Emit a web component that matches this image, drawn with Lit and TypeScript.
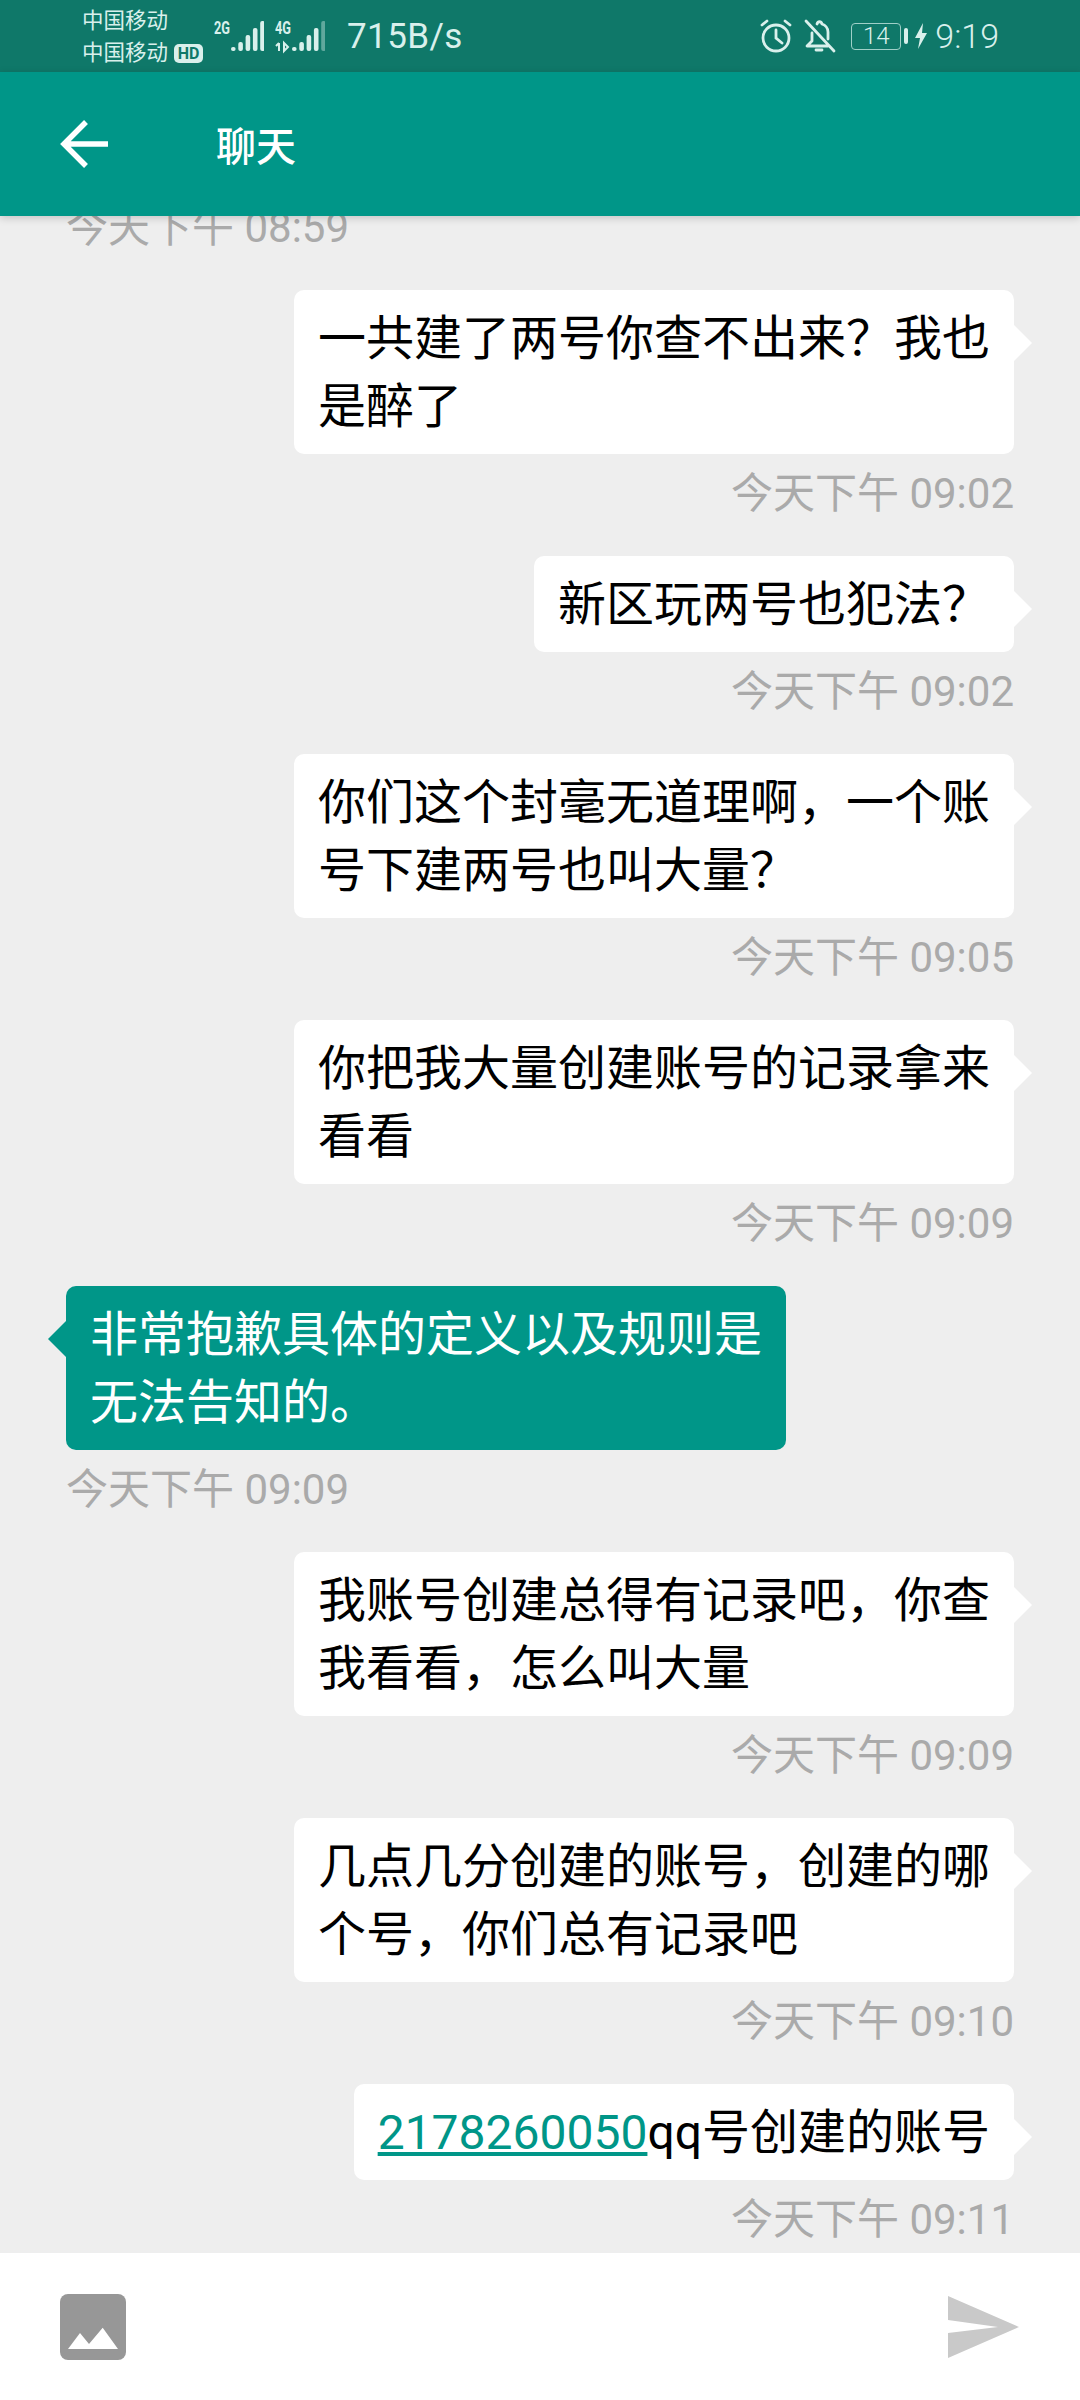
import { LitElement, html, css, svg } from "lit";
import { customElement } from "lit/decorators.js";

type Msg = { side: "me" | "them"; text?: string; link?: string; rest?: string; time: string };

const MSGS: Msg[] = [
  { side: "me", text: "一共建了两号你查不出来？我也是醉了", time: "今天下午 09:02" },
  { side: "me", text: "新区玩两号也犯法？", time: "今天下午 09:02" },
  { side: "me", text: "你们这个封毫无道理啊，一个账号下建两号也叫大量？", time: "今天下午 09:05" },
  { side: "me", text: "你把我大量创建账号的记录拿来看看", time: "今天下午 09:09" },
  { side: "them", text: "非常抱歉具体的定义以及规则是无法告知的。", time: "今天下午 09:09" },
  { side: "me", text: "我账号创建总得有记录吧，你查我看看，怎么叫大量", time: "今天下午 09:09" },
  { side: "me", text: "几点几分创建的账号，创建的哪个号，你们总有记录吧", time: "今天下午 09:10" },
  { side: "me", link: "2178260050", rest: "qq号创建的账号", time: "今天下午 09:11" },
];

const TOPS = [34, 29, 22, 15, 8];
const bars = (dimLast: boolean) =>
  TOPS.map(
    (t, i) => svg`<rect x=${17 + i * 7.3} y=${t} width="4.6" height=${38 - t} rx="2" fill="currentColor" opacity=${dimLast && i === 4 ? 0.4 : 1}/>`
  );

@customElement("app-root")
export class AppRoot extends LitElement {
  static styles = css`
    :host {
      display: block;
      width: 1080px;
      height: 2400px;
      background: #eeeeee;
      font-family: Roboto, "Noto Sans CJK SC", sans-serif;
    }
    .page { display: flex; flex-direction: column; height: 2400px; }
    .status {
      height: 72px;
      flex: none;
      background: #0f7869;
      color: #d9f0ec;
      display: flex;
      align-items: center;
      padding: 0 81px 0 82px;
    }
    .carrier { display: flex; flex-direction: column; font-size: 21.5px; line-height: 32px; width: 132px; margin-top: 2px; }
    .carrier div { display: flex; align-items: center; white-space: nowrap; }
    .hd {
      margin-left: 6px;
      width: 29px; height: 19px; border-radius: 5px;
      background: #d9f0ec; color: #0f7869;
      font-size: 16px; font-weight: 700; line-height: 19px; text-align: center;
    }
    .sig { display: block; margin: 0 11px 0 0; }
    .speed { font-size: 35px; margin-left: 11px; letter-spacing: 0.4px; }
    .spacer { flex: 1; }
    .sicon { display: block; }
    .bell { display: block; margin-left: 12px; }
    .batt {
      width: 50px; height: 27px; box-sizing: border-box;
      border: 1.5px solid #9fd0c8; border-radius: 4px;
      font-size: 24px; line-height: 24px; text-align: center; font-weight: 300;
      margin-left: 15px;
    }
    .tip { width: 4px; height: 16px; background: #d9f0ec; border-radius: 2px; margin-left: 3px; }
    .bolt { display: block; margin-left: 7px; }
    .clock { font-size: 34px; font-weight: 300; margin-left: 8px; }
    .bar {
      height: 144px;
      flex: none;
      background: #009688;
      color: #fff;
      display: flex;
      align-items: center;
      padding-left: 60px;
      box-shadow: 0 2px 8px rgba(0, 0, 0, 0.18);
      position: relative;
      z-index: 1;
    }
    .bar svg { display: block; }
    .title { font-size: 40px; font-weight: 500; margin-left: 108px; }
    .list {
      flex: 1;
      min-height: 0;
      overflow: hidden;
      display: flex;
      flex-direction: column;
      padding: 0 66px;
    }
    .row { display: flex; flex-direction: column; align-items: flex-end; }
    .row.them { align-items: flex-start; }
    .bubble {
      position: relative;
      box-sizing: border-box;
      max-width: 720px;
      background: #fff;
      color: #000;
      font-size: 48px;
      line-height: 68px;
      padding: 15px 24px 13px;
      border-radius: 10px;
    }
    .bubble::after {
      content: "";
      position: absolute;
      top: 35px;
      right: -18px;
      border-left: 18px solid #fff;
      border-top: 18px solid transparent;
      border-bottom: 18px solid transparent;
    }
    .them .bubble { background: #009688; color: #fff; }
    .them .bubble::after {
      right: auto;
      left: -18px;
      border-left: 0;
      border-right: 18px solid #009688;
    }
    .bubble a { color: #009688; text-decoration: underline; }
    .time {
      font-size: 42px;
      line-height: 50px;
      color: #aaaaaa;
      margin-top: 15px;
      margin-bottom: 37px;
      white-space: nowrap;
    }
    .time.first { margin-top: -13px; margin-bottom: 37px; }
    .input {
      height: 147px;
      flex: none;
      background: #fff;
      display: flex;
      align-items: center;
      justify-content: space-between;
      padding: 0 60px;
    }
    .input svg { display: block; }
  `;

  render() {
    return html`
      <div class="page">
        <div class="status">
          <div class="carrier">
            <div>中国移动</div>
            <div>中国移动<span class="hd">HD</span></div>
          </div>
          <svg class="sig" width="50" height="46" viewBox="0 0 50 46">
            <text x="0" y="21" font-size="18" font-weight="700" fill="currentColor" font-family="Roboto" textLength="16" lengthAdjust="spacingAndGlyphs">2G</text>
            ${bars(false)}
          </svg>
          <svg class="sig" width="50" height="46" viewBox="0 0 50 46">
            <text x="0" y="21" font-size="18" font-weight="700" fill="currentColor" font-family="Roboto" textLength="16" lengthAdjust="spacingAndGlyphs">4G</text>
            <path d="M4 38v-8M1 33l3-3M9 30v8M9 38l4-4-4-4z" stroke="currentColor" stroke-width="2" fill="none"/>
            ${bars(true)}
          </svg>
          <div class="speed">715B/s</div>
          <div class="spacer"></div>
          <svg class="sicon" width="32" height="34" viewBox="0 0 32 34" fill="none" stroke="currentColor" stroke-width="2.8" stroke-linecap="round">
            <circle cx="16" cy="19" r="13"/>
            <path d="M16 11v8l6 5M2 6l5-4M30 6l-5-4"/>
          </svg>
          <svg class="bell" width="32" height="34" viewBox="0 0 32 34" fill="none" stroke="currentColor" stroke-width="2.8" stroke-linecap="round" stroke-linejoin="round">
            <path d="M8 14v8l-5 5h21M24 20v-7c0-4-3-7-6-8-1-3-4-3-5 0M2 2l28 30M12 31h6"/>
          </svg>
          <div class="batt">14</div>
          <div class="tip"></div>
          <svg class="bolt" width="12" height="26" viewBox="0 0 12 26"><path d="M8 0L0 15h5L3 26l9-16H7z" fill="currentColor"/></svg>
          <div class="clock">9:19</div>
        </div>
        <div class="bar">
          <svg width="48" height="48" viewBox="0 0 48 48" fill="none" stroke="#fff" stroke-width="5.5">
            <path d="M48 24H4M26 2L4 24l22 22"/>
          </svg>
          <div class="title">聊天</div>
        </div>
        <div class="list">
          <div class="row them"><div class="time first">今天下午 08:59</div></div>
          ${MSGS.map(
            (m) => html`
              <div class="row ${m.side}">
                <div class="bubble">${m.text ?? html`<a>${m.link}</a>${m.rest}`}</div>
                <div class="time">${m.time}</div>
              </div>
            `
          )}
        </div>
        <div class="input">
          <svg width="66" height="66" viewBox="0 0 66 66">
            <rect width="66" height="66" rx="8" fill="#979797"/>
            <path d="M8 55L20 39l9 11 13.700-16.300L58 55z" fill="#fff"/>
          </svg>
          <svg width="72" height="62" viewBox="0 0 72 62">
            <path d="M0 0L71 31 0 62 0 37 50 31 0 24z" fill="#c9c9c9"/>
          </svg>
        </div>
      </div>
    `;
  }
}
